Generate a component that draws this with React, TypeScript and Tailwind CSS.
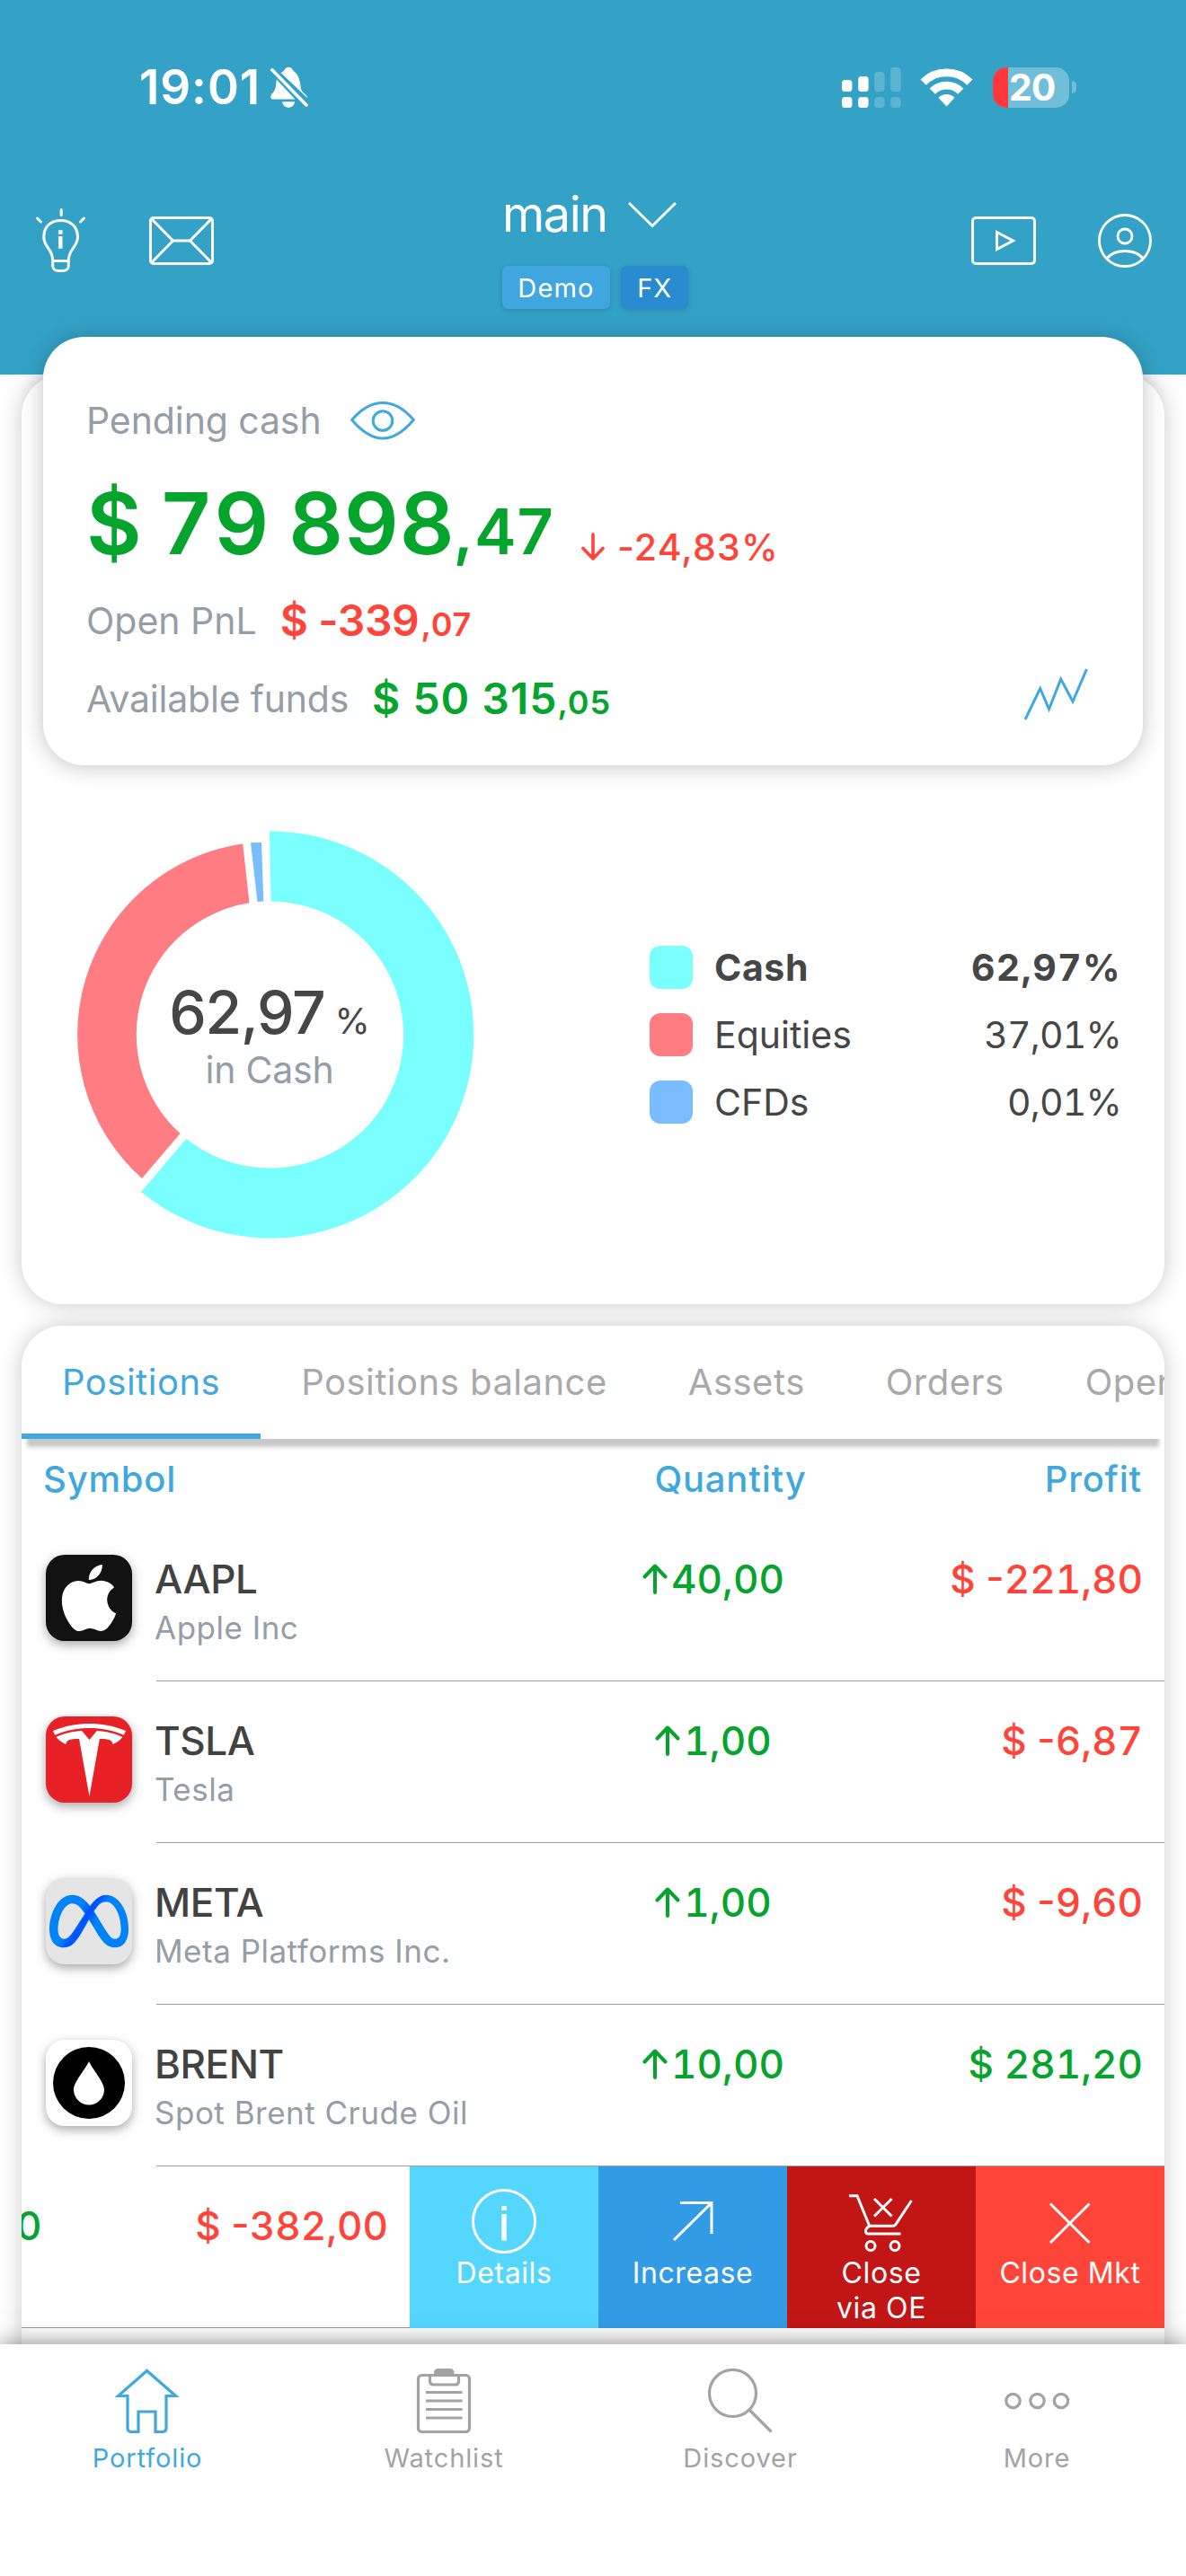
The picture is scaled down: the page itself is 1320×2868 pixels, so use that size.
import { ReactNode } from "react";
import { SiApple, SiMeta, SiTesla } from "react-icons/si";

const TABS = ["Positions", "Positions balance", "Assets", "Orders", "Open orders"];

const ALLOCATION = [
  { label: "Cash", value: "62,97%", swatch: "bg-[#7AFFFF]", labelText: "font-bold tracking-[0.6px]", valueText: "font-bold tracking-[1.4px]" },
  { label: "Equities", value: "37,01%", swatch: "bg-[#FF7C82]", labelText: "", valueText: "tracking-[-0.8px]" },
  { label: "CFDs", value: "0,01%", swatch: "bg-[#7ABDFF]", labelText: "", valueText: "tracking-[-0.8px]" },
];

interface Position {
  symbol: string;
  name: string;
  qty: string;
  profit: string;
  tile: string;
  logo: ReactNode;
}

const POSITIONS: Position[] = [
  {
    symbol: "AAPL", name: "Apple Inc", qty: "40,00", profit: "-221,80", tile: "bg-[#111]",
    logo: <SiApple size={74} className="text-white" />,
  },
  {
    symbol: "TSLA", name: "Tesla", qty: "1,00", profit: "-6,87", tile: "bg-[#E82127]",
    logo: <SiTesla size={81} className="text-white" />,
  },
  {
    symbol: "META", name: "Meta Platforms Inc.", qty: "1,00", profit: "-9,60", tile: "bg-[#E5E5E5]",
    logo: <SiMeta size={88} className="fill-[url(#meta-blue)]" />,
  },
  {
    symbol: "BRENT", name: "Spot Brent Crude Oil", qty: "10,00", profit: "281,20", tile: "bg-white",
    logo: (
      <svg width="80" height="80" viewBox="0 0 80 80">
        <circle cx="40" cy="40" r="40" fill="#000" />
        <path d="M40 16C36 25 23 39 23 47.5a17 17 0 0 0 34 0C57 39 44 25 40 16Z" fill="#fff" />
      </svg>
    ),
  },
];

function StatusBar() {
  return (
    <div className="flex h-[194px] items-center justify-between pl-[155px] pr-[122px]">
      <div className="flex items-center gap-[11px]">
        <span className="text-[53px] font-semibold leading-[66px] tracking-[0.9px]">19:01</span>
        <svg width="42" height="47" viewBox="0 0 42 47" fill="#fff">
          <path d="M11.5 7C13.5 6 15 5 15.8 3.4 17.5-.3 23-.3 24.6 3.4 25.5 5.4 28 6 30 9.5c3 5 3.2 11 4.2 16 .8 4 6.8 5.5 6.8 9.5Z" />
          <path d="M6.8 14.5 27.5 36.5H3C-.2 36.5-.6 33 1.6 30.5 6.5 26 6 21 6.8 14.5Z" />
          <path d="M13.2 39.2h13.8c-.8 8.7-13 8.7-13.8 0Z" />
          <path d="M1.8 3.8 40 43" stroke="#fff" strokeWidth="3.6" strokeLinecap="round" />
        </svg>
      </div>
      <div className="flex items-center">
        <svg width="66" height="45" viewBox="0 0 66 45" fill="#fff">
          <rect x="0" y="14" width="11.4" height="13" rx="3.5" />
          <rect x="18.2" y="10" width="11.4" height="17" rx="3.5" />
          <g opacity="0.2">
            <rect x="36.2" y="5" width="11.4" height="22" rx="3.5" />
            <rect x="54.2" y="0" width="11.4" height="27" rx="3.5" />
            <rect x="36.2" y="33" width="11.4" height="12" rx="3.5" />
            <rect x="54.2" y="33" width="11.4" height="12" rx="3.5" />
          </g>
          <rect x="0" y="33" width="11.4" height="12" rx="3.5" />
          <rect x="18.2" y="33" width="11.4" height="12" rx="3.5" />
        </svg>
        <svg className="ml-[21px]" width="59" height="43" viewBox="0 0 59 43" fill="none" stroke="#fff" strokeWidth="8.8">
          <path d="M3.6 15.6a36.6 36.6 0 0 1 51.8 0" />
          <path d="M13.7 25.7a22.3 22.3 0 0 1 31.6 0" />
          <path d="M29.5 42.5 20.5 32.8a12.7 12.7 0 0 1 18 0Z" fill="#fff" stroke="none" />
        </svg>
        <div className="ml-[22px] flex h-[45px] w-[85px] items-center rounded-[15px] bg-white/30">
          <div className="h-full w-[17px] rounded-l-[15px] bg-[#FF383C]" />
          <span className="ml-px text-[41px] font-bold leading-[45px] tracking-[-1.2px]">20</span>
        </div>
        <div className="ml-[3px] h-[14px] w-[5px] rounded-r-full bg-white/30" />
      </div>
    </div>
  );
}

function TopBar() {
  return (
    <div className="flex items-start justify-between pl-[40px] pr-[38px]">
      <div className="mt-[38px] flex items-center gap-[71px]">
        <svg width="55" height="72" viewBox="0 0 55 72" fill="none" stroke="#fff" strokeWidth="3" strokeLinecap="round">
          <path d="M28.2 1.5v6M1.5 11l4 4M53.5 11l-4 4" />
          <path d="M18.7 58.5C18.7 44 8.7 44 8.7 31.5 8.7 20 17 13.5 27.5 13.5S46.5 20 46.5 31.5C46.5 44 36.3 44 36.3 58.5V64c0 3.5-3 5.5-6.3 5.5h-5c-3.3 0-6.3-2-6.3-5.5ZM18.7 58.5h17.6" />
          <path d="M27.3 24.2v4.5M27.3 31v13.7" strokeWidth="4.4" strokeLinecap="butt" />
        </svg>
        <svg width="72" height="54" viewBox="0 0 72 54" fill="none" stroke="#fff" strokeWidth="3">
          <rect x="1.5" y="1.5" width="69" height="51" rx="3.5" />
          <path d="M2.5 2.5 26.5 27h19l24-24.5M2.5 51.5 26.5 27M69.5 51.5 45.5 27" />
        </svg>
      </div>
      <div className="ml-[6px] mt-[17px] flex w-[207px] flex-col">
        <div className="flex h-[56px] items-center gap-[23px]">
          <span className="text-[54px] leading-none tracking-[-1.5px]">main</span>
          <svg width="54" height="30" viewBox="0 0 54 30" fill="none" stroke="#fff" strokeWidth="3">
            <path d="M1 2 27 27.5 53 2" />
          </svg>
        </div>
        <div className="mt-[29px] flex gap-[12px] text-[29px] leading-[49px]">
          <span className="h-[48px] w-[120px] rounded-[7px] bg-[#3FA6DF] text-center tracking-[1.2px] shadow-[0_2px_6px_rgba(0,0,0,0.15)]">Demo</span>
          <span className="h-[48px] w-[75px] rounded-[7px] bg-[#298BCF] text-center tracking-[0.9px] shadow-[0_2px_6px_rgba(0,0,0,0.15)]">FX</span>
        </div>
      </div>
      <div className="mt-[44px] flex items-center gap-[69px]">
        <svg width="72" height="54" viewBox="0 0 72 54" fill="none" stroke="#fff" strokeWidth="3">
          <rect x="1.5" y="1.5" width="69" height="51" rx="3.5" />
          <path d="M28.5 17.5 46.5 27 28.5 36.5Z" />
        </svg>
        <svg width="60" height="60" viewBox="0 0 60 60" fill="none" stroke="#fff" strokeWidth="2.8">
          <circle cx="30" cy="30" r="28.5" />
          <circle cx="30" cy="25" r="8" />
          <path d="M9.5 50C14 44.5 21.5 41.5 30 41.5S46 44.5 50.5 50" />
        </svg>
      </div>
    </div>
  );
}

function SummaryCard() {
  return (
    <div className="relative z-20 mx-[24px] -mt-[42px] h-[477px] rounded-[46px] bg-white pl-[48px] pr-[61px] pt-[63px] text-[41px] shadow-[0_2px_24px_rgba(0,0,0,0.24)]">
      <div className="flex h-[60px] items-center gap-[32px]">
        <span className="leading-none tracking-[-0.1px] text-[#959DA6]">Pending cash</span>
        <svg width="72" height="43" viewBox="0 0 72 43" fill="none" stroke="#3FA8DF" strokeWidth="3">
          <path d="M1.7 20.5C14 6 25 1.5 36 1.5S58 6 70.3 20.5C58 35 47 41 36 41S14 35 1.7 20.5Z" />
          <circle cx="36" cy="21.5" r="10.8" />
        </svg>
      </div>
      <div className="mt-[35px] flex h-[100px] items-baseline whitespace-nowrap font-semibold text-[#04A42D]">
        <span className="text-[95px] leading-[100px] tracking-[1px] [word-spacing:-4px]">
          $ <span className="tracking-[4px]">7</span>9 898
        </span>
        <span className="-ml-[2px] text-[70px] leading-none tracking-[1px]">,47</span>
        <span className="ml-[30px] flex translate-y-[7px] items-baseline gap-[14px] font-medium text-[#FF453A]">
          <svg width="26" height="31" viewBox="0 0 26 31" fill="none" stroke="currentColor" strokeWidth="3.6" strokeLinecap="round" strokeLinejoin="round">
            <path d="M13 2v26.500M2 17.500l11 11.500 11-11.500" />
          </svg>
          <span className="leading-none tracking-[1.2px]">-24,83%</span>
        </span>
      </div>
      <div className="mt-[28px] flex h-[60px] items-center">
        <span className="leading-none text-[#959DA6]">Open PnL</span>
        <span className="ml-[26px] text-[48px] font-semibold leading-none tracking-[-0.4px] text-[#FF453A]">
          $ -339<span className="ml-[2px] text-[36px] tracking-[0.8px]">,07</span>
        </span>
      </div>
      <div className="mt-[27px] flex h-[60px] items-center">
        <span className="leading-none tracking-[-0.2px] text-[#959DA6]">Available funds</span>
        <span className="ml-[26px] text-[48px] font-semibold leading-none tracking-[1px] text-[#04A42D]">
          $ 50 315<span className="text-[36px] tracking-[0.9px]">,05</span>
        </span>
        <svg className="-mt-[10px] ml-auto" width="72" height="58" viewBox="0 0 72 58" fill="none" stroke="#3FA8DF" strokeWidth="3">
          <path d="M2 57 18.7 22.5 28.5 45.5 41.7 12 55 37 70.5 1" />
        </svg>
      </div>
    </div>
  );
}

function Allocation() {
  return (
    <div className="mt-[72px] flex items-center justify-between pl-[48px] pr-[48px]">
      <div className="grid h-[456px] w-[456px] place-items-center [&>*]:col-start-1 [&>*]:row-start-1">
        <svg width="456" height="456" viewBox="0 0 456 456">
          <path d="M228 1.5A226.5 226.5 0 1 1 85 403L135.5 343.7A148.5 148.5 0 1 0 229.7 79.5Z" fill="#7AFFFF" />
          <path d="M86 388A214.5 214.5 0 0 1 198.2 15.5L205.5 81.3A148.5 148.5 0 0 0 128.5 338Z" fill="#FF7C82" />
          <path d="M207 14.3 219 13.8 221.3 79.6 214.5 80Z" fill="#7ABDFF" />
        </svg>
        <div className="flex flex-col items-center pt-[2px] text-[#464646]">
          <div className="flex items-baseline gap-[11px]">
            <span className="text-[66px] font-medium leading-[66px] tracking-[-1.3px]">62,97</span>
            <span className="text-[40px] leading-none">%</span>
          </div>
          <span className="mt-[9px] text-[41px] leading-[44px] tracking-[-0.2px] text-[#959DA6]">in Cash</span>
        </div>
      </div>
      <div className="flex w-[525px] flex-col gap-[27px] text-[41px] leading-[48px] text-[#464646]">
        {ALLOCATION.map(({ label, value, swatch, labelText, valueText }) => (
          <div key={label} className="flex items-center">
            <div className={`h-[48px] w-[48px] rounded-[12px] ${swatch}`} />
            <span className={`ml-[24px] ${labelText}`}>{label}</span>
            <span className={`ml-auto tabular-nums ${valueText}`}>{value}</span>
          </div>
        ))}
      </div>
    </div>
  );
}

function Profit({ value }: { value: string }) {
  const loss = value.startsWith("-");
  return (
    <span className={loss ? "text-[#FF453A]" : "text-[#04A42D]"}>
      {loss ? "$ -" : "$ "}
      <span className="tabular-nums">{value.replace("-", "")}</span>
    </span>
  );
}

function PositionRow({ symbol, name, qty, profit, tile, logo }: Position) {
  return (
    <div className="flex h-[180px] pl-[27px]">
      <div className={`mt-[39px] flex h-[96px] w-[96px] shrink-0 items-center justify-center rounded-[21px] shadow-[0_4px_12px_rgba(0,0,0,0.35)] ${tile}`}>
        {logo}
      </div>
      <div className="ml-[27px] flex flex-1 border-b border-[#9B9D9F] pr-[24px] pt-[40px] text-[44px] font-medium leading-[52px]">
        <div className="-ml-[2px] flex flex-1 flex-col">
          <span className="tracking-[-0.4px] text-[#424242]">{symbol}</span>
          <span className="mt-[5px] whitespace-nowrap text-[35px] font-normal leading-[46px] tracking-[0.5px] text-[#959DA6]">{name}</span>
        </div>
        <div className="flex h-[52px] w-[300px] items-center justify-center gap-[4px] tabular-nums text-[#04A42D]">
          <svg width="28" height="34" viewBox="0 0 28 34" fill="none" stroke="currentColor" strokeWidth="4" strokeLinecap="round" strokeLinejoin="round">
            <path d="M14 32V3M2.500 14.500 14 2.500l11.500 12" />
          </svg>
          {qty}
        </div>
        <div className="w-[328px] text-right">
          <Profit value={profit} />
        </div>
      </div>
    </div>
  );
}

const ACTIONS = [
  {
    lines: ["Details"],
    bg: "bg-[#55D6FF]",
    icon: (
      <>
        <circle cx="36" cy="36" r="34.5" />
        <path d="M36 19v5M36 28v29.5" strokeWidth="5.5" />
      </>
    ),
  },
  { lines: ["Increase"], bg: "bg-[#319BE5]", icon: <path d="M22 15.5H57V50M57 15.5 15 57" /> },
  {
    lines: ["Close", "via OE"],
    bg: "bg-[#C21516]",
    icon: (
      <>
        <path d="M0 7.7h9L22.7 41.3h26c2 0 3-1 4-3L69.5 13M22.7 41.3c-3 1.5-4.2 4-4.2 5.7 0 2 1 3 3 3h36M28 11l19.5 19.5M47.5 11 28 30.5" />
        <circle cx="24" cy="63.5" r="5" />
        <circle cx="51" cy="63.5" r="5" />
      </>
    ),
  },
  { lines: ["Close Mkt"], bg: "bg-[#FF453A]", icon: <path d="M14 16.5 57.5 60M57.5 16.5 14 60" /> },
];

function SwipedRow() {
  return (
    <div className="flex h-[180px]">
      <div className="flex w-[432px] justify-between overflow-hidden border-b border-[#9B9D9F] pr-[24px] pt-[40px] text-[44px] font-medium leading-[52px]">
        <span className="-ml-[6px] tabular-nums text-[#04A42D]">0</span>
        <Profit value="-382,00" />
      </div>
      {ACTIONS.map(({ lines, bg, icon }) => (
        <button key={lines[0]} type="button" className={`flex w-[210px] flex-col items-center pt-[25px] text-[32px] leading-[39px] tracking-[0.6px] text-white ${bg}`}>
          <svg className="mb-[2px] shrink-0" width="72" height="72" viewBox="0 0 72 72" fill="none" stroke="#fff" strokeWidth="3">
            {icon}
          </svg>
          {lines.map((line) => (
            <span key={line}>{line}</span>
          ))}
        </button>
      ))}
    </div>
  );
}

const NAV = [
  {
    label: "Portfolio",
    icon: <path d="M35.5 2.5 3.5 30.5H14V66c0 3 1.5 4.5 4.5 4.5H26V48h19v22.5h7.5c3 0 4.5-1.5 4.5-4.5V30.5H67.5Z" />,
  },
  {
    label: "Watchlist",
    icon: (
      <>
        <rect x="7.5" y="7.5" width="57" height="63" rx="4" />
        <path d="M20.5 8v6c0 2.5 1.5 4 4 4h24c2.5 0 4-1.5 4-4V8M16 26.5h40.5M16 36h40.5M16 45.5h40.5M16 55h40.5" />
        <path d="M25 9V5c0-3.5 2-5 5-5h12.5c3 0 5 1.5 5 5v4Z" fill="currentColor" stroke="none" />
      </>
    ),
  },
  {
    label: "Discover",
    icon: (
      <>
        <circle cx="27.5" cy="27.5" r="26" />
        <path d="M46 46 70.5 70.5" />
      </>
    ),
  },
  {
    label: "More",
    icon: (
      <>
        <circle cx="9.5" cy="36" r="7.7" />
        <circle cx="36.5" cy="36" r="7.7" />
        <circle cx="63" cy="36" r="7.7" />
      </>
    ),
  },
];

function BottomNav({ active }: { active: string }) {
  return (
    <nav className="relative z-30 flex h-[258px] shrink-0 bg-white pt-[27px] shadow-[0_0_24px_rgba(0,0,0,0.5)]">
      {NAV.map(({ label, icon }) => (
        <button
          key={label}
          type="button"
          className={`flex flex-1 flex-col items-center pr-[2px] ${label === active ? "text-[#3FA8DF]" : "text-[#A3A3A3]"}`}
        >
          <svg width="72" height="72" viewBox="0 0 72 72" fill="none" stroke="currentColor" strokeWidth="3.2">
            {icon}
          </svg>
          <span className="mt-[10px] text-[29px] leading-[36px] tracking-[0.9px]">{label}</span>
        </button>
      ))}
    </nav>
  );
}

export default function App() {
  return (
    <div className="flex h-[2868px] w-[1320px] flex-col overflow-hidden bg-white font-[Inter,sans-serif]">
      <svg width="0" height="0" className="absolute">
        <linearGradient id="meta-blue" x1="0" y1="0.2" x2="1" y2="0.6">
          <stop offset="0.35" stopColor="#0082FB" />
          <stop offset="0.48" stopColor="#0050FF" />
          <stop offset="0.62" stopColor="#0082FB" />
        </linearGradient>
      </svg>

      <header className="relative z-10 h-[417px] shrink-0 bg-[#33A2C6] text-white">
        <StatusBar />
        <TopBar />
      </header>

      <section className="mx-[24px] h-[1035px] shrink-0 rounded-[46px] bg-white shadow-[0_0_24px_rgba(0,0,0,0.22)]">
        <SummaryCard />
        <Allocation />
      </section>

      <section className="mx-[24px] mt-[24px] min-h-0 flex-1 rounded-t-[46px] bg-white shadow-[0_0_24px_rgba(0,0,0,0.22)]">
        <div className="flex h-[126px] overflow-hidden rounded-t-[46px] bg-white text-[40px] leading-[126px] tracking-[0.5px] shadow-[0_15px_4px_-6px_rgba(0,0,0,0.22)]">
          {TABS.map((tab, i) => (
            <button
              key={tab}
              type="button"
              className={`shrink-0 px-[45px] ${i === 0 ? "text-[#3FA8DF] shadow-[inset_0_-6px_0_#3FA8DF]" : "text-[#A9A9A9]"}`}
            >
              {tab}
            </button>
          ))}
        </div>
        <div className="flex h-[90px] items-center pl-[24px] pr-[25px] text-[40px] font-medium tracking-[0.8px] text-[#3FA8DF]">
          <span className="flex-1">Symbol</span>
          <span className="w-[300px] text-center">Quantity</span>
          <span className="w-[308px] text-right">Profit</span>
        </div>
        {POSITIONS.map((p) => (
          <PositionRow key={p.symbol} {...p} />
        ))}
        <SwipedRow />
      </section>

      <BottomNav active="Portfolio" />
    </div>
  );
}
